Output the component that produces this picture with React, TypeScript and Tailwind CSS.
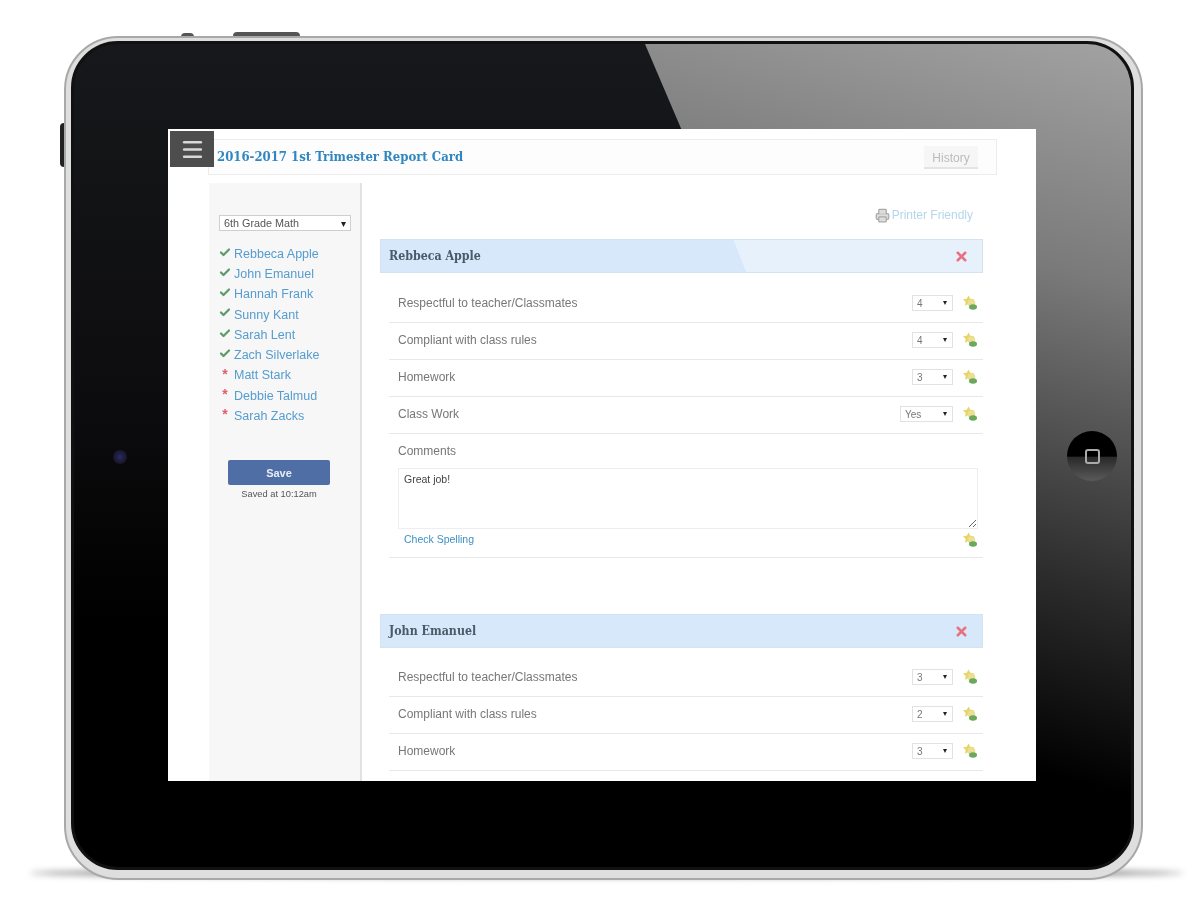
import { Check, Menu, Printer, X } from "lucide-react";

const sansFont = "font-['Liberation_Sans',Arial,sans-serif]";

type Student = { name: string; done: boolean };

const students: Student[] = [
  { name: "Rebbeca Apple", done: true },
  { name: "John Emanuel", done: true },
  { name: "Hannah Frank", done: true },
  { name: "Sunny Kant", done: true },
  { name: "Sarah Lent", done: true },
  { name: "Zach Silverlake", done: true },
  { name: "Matt Stark", done: false },
  { name: "Debbie Talmud", done: false },
  { name: "Sarah Zacks", done: false },
];

const NoteIcon = () => (
  <svg width="16" height="16" viewBox="0 0 16 16" className="shrink-0">
    <path
      d="M6.5 0.5l1.8 3.2 3.9.6-2.8 2.7.7 3.8-3.6-1.8-3.5 1.8.7-3.8L1 4.3l3.8-.6z"
      fill="#e8d468"
    />
    <circle cx="9.5" cy="8" r="3.8" fill="#e9e096" />
    <ellipse cx="11" cy="12" rx="4" ry="2.8" fill="#6aa85c" />
  </svg>
);

const Dropdown = ({ value, wide }: { value: string; wide?: boolean }) => (
  <div
    className={`flex h-4 items-center justify-between border border-[#e2e2e2] bg-white pl-1 pr-[5px] text-[10px] text-[#777] ${
      wide ? "w-[53px]" : "w-[41px]"
    }`}
  >
    <span>{value}</span>
    <span className="text-[8px] text-[#222]">▾</span>
  </div>
);

const ScoreRow = ({ label, value }: { label: string; value: string }) => (
  <div className="flex h-[37px] items-center justify-between border-b border-[#e8e8e8] pb-[2px] pl-[9px] pr-[5px]">
    <span className="text-[12px] text-[#777]">{label}</span>
    <div className="flex items-center gap-[9px]">
      <Dropdown value={value} wide={value === "Yes"} />
      <NoteIcon />
    </div>
  </div>
);

const PanelHeader = ({ name, glare }: { name: string; glare?: boolean }) => (
  <div
    className={`flex h-[34px] items-center justify-between border border-[#d3e3f2] pl-[8px] pr-[13px] ${
      glare
        ? "bg-[linear-gradient(68deg,#d6e8fa_59.5%,#e6f1fc_59.5%)]"
        : "bg-[#d6e8fa]"
    }`}
  >
    <span className="font-['DejaVu_Serif_Condensed','DejaVu_Serif',serif] text-[12.3px] font-bold text-[#4a5a68]">
      {name}
    </span>
    <X size={15} strokeWidth={4} color="#e8707f" />
  </div>
);

const Sidebar = () => (
  <aside className="ml-px w-[153px] shrink-0 border-r-2 border-[#e2e2e2] bg-[#f7f7f7] px-[10px] pt-8">
    <div className="flex h-4 w-[132px] items-center justify-between border border-[#cfcfcf] bg-white pl-1 pr-1 text-[10.8px] text-[#555]">
      <span>6th Grade Math</span>
      <span className="text-[10px] text-[#222]">▾</span>
    </div>
    <ul className="mt-[13px]">
      {students.map((s) => (
        <li key={s.name} className="flex h-[20.25px] items-center">
          <span className="flex w-[15px] justify-center pr-[3px]">
            {s.done ? (
              <Check size={13} strokeWidth={4.5} color="#5d9b6c" className="-mt-1" />
            ) : (
              <span className="-mt-1 text-[14px] font-bold leading-none text-[#e0606a]">*</span>
            )}
          </span>
          <span className="text-[12.5px] text-[#559ccf]">{s.name}</span>
        </li>
      ))}
    </ul>
    <button className="ml-[9px] mt-[34px] h-[25px] w-[102px] rounded-[2px] bg-[#4f6ea6] text-[11px] font-bold text-[#e8edf5]">
      Save
    </button>
    <p className="ml-[9px] mt-[3px] w-[102px] text-center text-[9.3px] text-[#555]">
      Saved at 10:12am
    </p>
  </aside>
);

const ReportCard = () => (
  <div className={`relative z-10 h-[652px] w-[868px] overflow-hidden bg-white pl-10 pr-[39px] pt-[10px] blur-[0.6px] ${sansFont}`}>
    <div className="absolute left-[2px] top-[2px] flex h-9 w-11 items-center justify-center bg-[#4d4d4d]">
      <Menu size={25} strokeWidth={2.5} color="#d8d8d8" />
    </div>

    <header className="flex h-9 items-center justify-between border border-[#ececec] bg-[#fdfdfd] pl-2 pr-[18px]">
      <h1 className="font-['DejaVu_Serif_Condensed','DejaVu_Serif',serif] text-[13px] font-bold text-[#2f86c0]">
        2016-2017 1st Trimester Report Card
      </h1>
      <button className="flex h-[23px] w-[54px] items-center justify-center border-b-2 border-[#e4e4e4] bg-[#f6f6f6] pt-[3px] text-[12px] text-[#bbb]">
        History
      </button>
    </header>

    <div className="mt-2 flex h-[610px]">
      <Sidebar />
      <main className="ml-[18px] w-[603px]">
        <div className="mt-6 flex h-4 items-center justify-end gap-[2px] pr-[10px] text-[12px] text-[#b4d6ea]">
          <Printer size={15} color="#aaa" fill="#ddd" />
          <span>Printer Friendly</span>
        </div>

        <section className="mt-4">
          <PanelHeader name="Rebbeca Apple" glare />
          <div className="ml-[9px] mt-[13px]">
            <ScoreRow label="Respectful to teacher/Classmates" value="4" />
            <ScoreRow label="Compliant with class rules" value="4" />
            <ScoreRow label="Homework" value="3" />
            <ScoreRow label="Class Work" value="Yes" />
            <div className="h-[124px] border-b border-[#e8e8e8] pl-[9px] pr-[5px]">
              <div className="flex h-[34px] items-center text-[12px] text-[#777]">Comments</div>
              <textarea
                readOnly
                defaultValue="Great job!"
                className="block h-[61px] w-[580px] border border-[#eee] px-[5px] py-[3px] text-[10.5px] text-[#444] outline-none"
              />
              <div className="flex h-[22px] items-center justify-between pl-[6px]">
                <span className="text-[10.5px] text-[#3f8fc4]">Check Spelling</span>
                <NoteIcon />
              </div>
            </div>
          </div>
        </section>

        <section className="mt-14">
          <PanelHeader name="John Emanuel" />
          <div className="ml-[9px] mt-3">
            <ScoreRow label="Respectful to teacher/Classmates" value="3" />
            <ScoreRow label="Compliant with class rules" value="2" />
            <ScoreRow label="Homework" value="3" />
          </div>
        </section>
      </main>
    </div>
  </div>
);

const Tablet = () => (
  <div className="relative h-[844px] w-[1079px]">
    {/* hardware buttons and floor shadow */}
    <div className="absolute left-[117px] top-[-3px] h-[4px] w-[13px] rounded-t-sm bg-[#555]" />
    <div className="absolute left-[169px] top-[-4px] h-[5px] w-[67px] rounded-t-sm bg-[#555]" />
    <div className="absolute left-[-4px] top-[87px] h-[44px] w-[5px] rounded-l-sm bg-[#222]" />
    <div className="absolute bottom-[3px] left-[-34px] right-[-40px] h-[8px] rounded-[50%] bg-[#777] blur-[3px]" />

    <div className="relative h-full rounded-[54px] border-2 border-[#a8a8a8] bg-[#dedede] pb-[8px] pl-[5px] pr-[7px] pt-[3px]">
      <div className="relative h-full overflow-hidden rounded-[47px] border-[3px] border-[#111] bg-[linear-gradient(180deg,#17181b_0%,#0c0c0e_45%,#000_70%)] pl-[94px] pt-[85px]">
        <div className="absolute inset-0 bg-[linear-gradient(195deg,#a2a2a2_0%,#7a7a7a_22%,#2c2c2c_50%,#000_68%)] [clip-path:polygon(571px_0,100%_0,100%_100%,922px_100%)]" />
        <ReportCard />
        <div className="absolute left-[39px] top-[406px] h-[14px] w-[14px] rounded-full bg-[radial-gradient(circle,#2a2a66_0%,#1a1a33_55%,#111_100%)]" />
        <div className="absolute left-[993px] top-[387px] flex h-[50px] w-[50px] items-center justify-center rounded-full bg-[linear-gradient(180deg,#000_0%,#000_50%,#2a2a2a_53%,#5a5a5a_100%)] blur-[0.5px]">
          <div className="h-[15px] w-[15px] rounded-[3px] border-2 border-[#aaa]" />
        </div>
      </div>
    </div>
  </div>
);

export default function App() {
  return (
    <div className="h-[900px] w-[1200px] overflow-hidden bg-white pl-16 pt-9">
      <Tablet />
    </div>
  );
}
